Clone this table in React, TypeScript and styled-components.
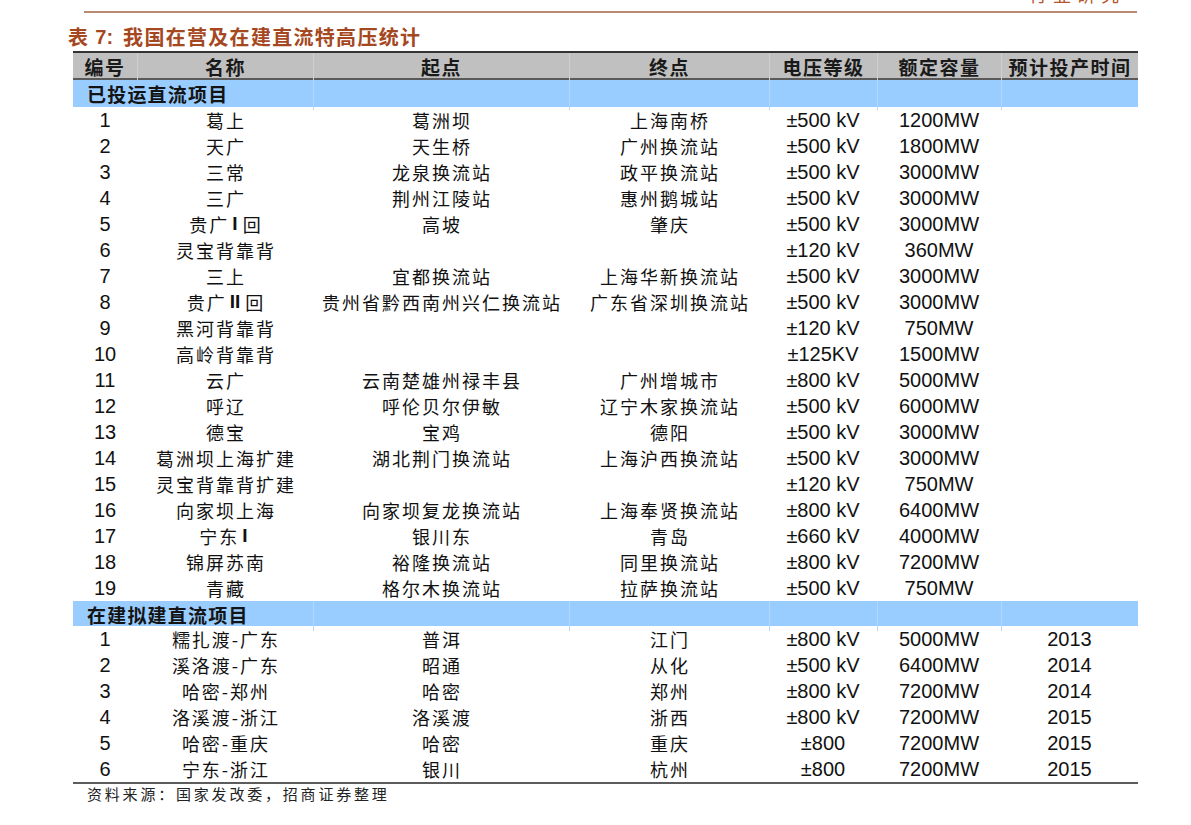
import React from "react";
import styled, { createGlobalStyle } from "styled-components";

const GlobalStyle = createGlobalStyle`
  html, body { margin: 0; padding: 0; background: #ffffff; }
  body { font-family: "Liberation Sans", "Noto Sans CJK SC", sans-serif; color: #111; }
`;

const CN = `"Noto Sans CJK SC", "Liberation Sans", sans-serif`;
const LATIN = `"Liberation Sans", "Noto Sans CJK SC", sans-serif`;

const Page = styled.div`
  width: 1191px;
  height: 825px;
  display: flex;
  flex-direction: column;
  overflow: hidden;
`;

const TopBar = styled.div`
  margin-left: 84px;
  width: 1053px;
  height: 11px;
  border-bottom: 2px solid #b98a74;
  display: flex;
  justify-content: flex-end;
  align-items: flex-start;
`;

const TopClip = styled.div`
  height: 4px;
  overflow: hidden;
  margin-right: 12px;
`;

const TopText = styled.div`
  font-family: ${CN};
  font-size: 18px;
  line-height: 18px;
  margin-top: -15px;
  letter-spacing: 6px;
  color: #b4552a;
`;

const Title = styled.h1`
  margin: 13px 0 1px 68px;
  height: 24px;
  padding-bottom: 2px;
  box-sizing: border-box;
  display: flex;
  align-items: center;
  font-family: ${CN};
  font-size: 20px;
  line-height: 24px;
  font-weight: 700;
  letter-spacing: 1.3px;
  color: #a5481f;
  white-space: nowrap;
`;

const TitleNum = styled.span`
  font-family: ${LATIN};
  font-weight: 700;
  margin: 0 10px 0 6px;
  letter-spacing: 0;
`;

const COLS = "64px 176px 256px 200px 108px 124px 137px";

const Table = styled.div`
  margin-left: 73px;
  width: 1065px;
  display: flex;
  flex-direction: column;
  border-bottom: 2px solid #5c5c5c;
`;

const HeadRow = styled.div`
  display: grid;
  grid-template-columns: ${COLS};
  height: 25px;
  background: #c0c0c0;
  border-top: 2px solid #333333;
  border-bottom: 2px solid #5a5a5a;
`;

const HeadCell = styled.div<{ $first?: boolean }>`
  display: flex;
  align-items: center;
  justify-content: center;
  padding-bottom: 3px;
  font-family: ${CN};
  font-size: 19px;
  font-weight: 700;
  letter-spacing: 1.5px;
  color: #1a1a1a;
  border-left: ${(p) => (p.$first ? "none" : "1px solid #cfcfcf")};
  white-space: nowrap;
`;

const SectionRow = styled.div<{ $h: number }>`
  display: grid;
  grid-template-columns: ${COLS};
  height: ${(p) => p.$h}px;
  background: #99ccff;
`;

const SectionLabel = styled.div`
  grid-column: span 2;
  display: flex;
  align-items: center;
  padding: 0 0 3px 14px;
  font-family: ${CN};
  font-size: 19px;
  font-weight: 700;
  letter-spacing: 1.2px;
  color: #141414;
  white-space: nowrap;
`;

const SectionCell = styled.div`
  border-left: 1px solid #b3d8ff;
`;

const Row = styled.div`
  display: grid;
  grid-template-columns: ${COLS};
  height: 26px;
`;

const Cell = styled.div<{ $num?: boolean }>`
  display: flex;
  align-items: center;
  justify-content: center;
  white-space: nowrap;
  font-family: ${(p) => (p.$num ? LATIN : CN)};
  font-size: ${(p) => (p.$num ? "20px" : "18px")};
  letter-spacing: ${(p) => (p.$num ? "0" : "2px")};
  padding: ${(p) => (p.$num ? "0 0 1px 0" : "0 0 2px 2px")};
  color: #111;
`;

const Roman = styled.span`
  font-family: ${LATIN};
  font-weight: 700;
  font-size: 19px;
  margin: 0 5px 0 3px;
  letter-spacing: 0;
`;

const Footer = styled.div`
  margin: 0 0 0 87px;
  font-family: ${CN};
  font-size: 15px;
  line-height: 20px;
  letter-spacing: 2.8px;
  color: #222;
  white-space: nowrap;
`;

type Rec = {
  no: string;
  name: React.ReactNode;
  from: string;
  to: string;
  kv: string;
  mw: string;
  year?: string;
};

const built: Rec[] = [
  { no: "1", name: "葛上", from: "葛洲坝", to: "上海南桥", kv: "±500 kV", mw: "1200MW" },
  { no: "2", name: "天广", from: "天生桥", to: "广州换流站", kv: "±500 kV", mw: "1800MW" },
  { no: "3", name: "三常", from: "龙泉换流站", to: "政平换流站", kv: "±500 kV", mw: "3000MW" },
  { no: "4", name: "三广", from: "荆州江陵站", to: "惠州鹅城站", kv: "±500 kV", mw: "3000MW" },
  { no: "5", name: <>贵广<Roman>I</Roman>回</>, from: "高坡", to: "肇庆", kv: "±500 kV", mw: "3000MW" },
  { no: "6", name: "灵宝背靠背", from: "", to: "", kv: "±120 kV", mw: "360MW" },
  { no: "7", name: "三上", from: "宜都换流站", to: "上海华新换流站", kv: "±500 kV", mw: "3000MW" },
  { no: "8", name: <>贵广<Roman>II</Roman>回</>, from: "贵州省黔西南州兴仁换流站", to: "广东省深圳换流站", kv: "±500 kV", mw: "3000MW" },
  { no: "9", name: "黑河背靠背", from: "", to: "", kv: "±120 kV", mw: "750MW" },
  { no: "10", name: "高岭背靠背", from: "", to: "", kv: "±125KV", mw: "1500MW" },
  { no: "11", name: "云广", from: "云南楚雄州禄丰县", to: "广州增城市", kv: "±800 kV", mw: "5000MW" },
  { no: "12", name: "呼辽", from: "呼伦贝尔伊敏", to: "辽宁木家换流站", kv: "±500 kV", mw: "6000MW" },
  { no: "13", name: "德宝", from: "宝鸡", to: "德阳", kv: "±500 kV", mw: "3000MW" },
  { no: "14", name: "葛洲坝上海扩建", from: "湖北荆门换流站", to: "上海沪西换流站", kv: "±500 kV", mw: "3000MW" },
  { no: "15", name: "灵宝背靠背扩建", from: "", to: "", kv: "±120 kV", mw: "750MW" },
  { no: "16", name: "向家坝上海", from: "向家坝复龙换流站", to: "上海奉贤换流站", kv: "±800 kV", mw: "6400MW" },
  { no: "17", name: <>宁东<Roman>I</Roman></>, from: "银川东", to: "青岛", kv: "±660 kV", mw: "4000MW" },
  { no: "18", name: "锦屏苏南", from: "裕隆换流站", to: "同里换流站", kv: "±800 kV", mw: "7200MW" },
  { no: "19", name: "青藏", from: "格尔木换流站", to: "拉萨换流站", kv: "±500 kV", mw: "750MW" },
];

const planned: Rec[] = [
  { no: "1", name: "糯扎渡-广东", from: "普洱", to: "江门", kv: "±800 kV", mw: "5000MW", year: "2013" },
  { no: "2", name: "溪洛渡-广东", from: "昭通", to: "从化", kv: "±500 kV", mw: "6400MW", year: "2014" },
  { no: "3", name: "哈密-郑州", from: "哈密", to: "郑州", kv: "±800 kV", mw: "7200MW", year: "2014" },
  { no: "4", name: "洛溪渡-浙江", from: "洛溪渡", to: "浙西", kv: "±800 kV", mw: "7200MW", year: "2015" },
  { no: "5", name: "哈密-重庆", from: "哈密", to: "重庆", kv: "±800", mw: "7200MW", year: "2015" },
  { no: "6", name: "宁东-浙江", from: "银川", to: "杭州", kv: "±800", mw: "7200MW", year: "2015" },
];

const headers = ["编号", "名称", "起点", "终点", "电压等级", "额定容量", "预计投产时间"];

const DataRow: React.FC<{ r: Rec }> = ({ r }) => (
  <Row>
    <Cell $num>{r.no}</Cell>
    <Cell>{r.name}</Cell>
    <Cell>{r.from}</Cell>
    <Cell>{r.to}</Cell>
    <Cell $num>{r.kv}</Cell>
    <Cell $num>{r.mw}</Cell>
    <Cell $num>{r.year ?? ""}</Cell>
  </Row>
);

const Section: React.FC<{ label: string; h: number }> = ({ label, h }) => (
  <SectionRow $h={h}>
    <SectionLabel>{label}</SectionLabel>
    <SectionCell />
    <SectionCell />
    <SectionCell />
    <SectionCell />
    <SectionCell />
  </SectionRow>
);

export default function App() {
  return (
    <Page>
      <GlobalStyle />
      <TopBar>
        <TopClip>
          <TopText>行业研究</TopText>
        </TopClip>
      </TopBar>
      <Title>
        表<TitleNum>7:</TitleNum>我国在营及在建直流特高压统计
      </Title>
      <Table>
        <HeadRow>
          {headers.map((h, i) => (
            <HeadCell key={h} $first={i === 0}>
              {h}
            </HeadCell>
          ))}
        </HeadRow>
        <Section label="已投运直流项目" h={27} />
        {built.map((r) => (
          <DataRow key={"b" + r.no} r={r} />
        ))}
        <Section label="在建拟建直流项目" h={25} />
        {planned.map((r) => (
          <DataRow key={"p" + r.no} r={r} />
        ))}
      </Table>
      <Footer>资料来源：国家发改委，招商证券整理</Footer>
    </Page>
  );
}
